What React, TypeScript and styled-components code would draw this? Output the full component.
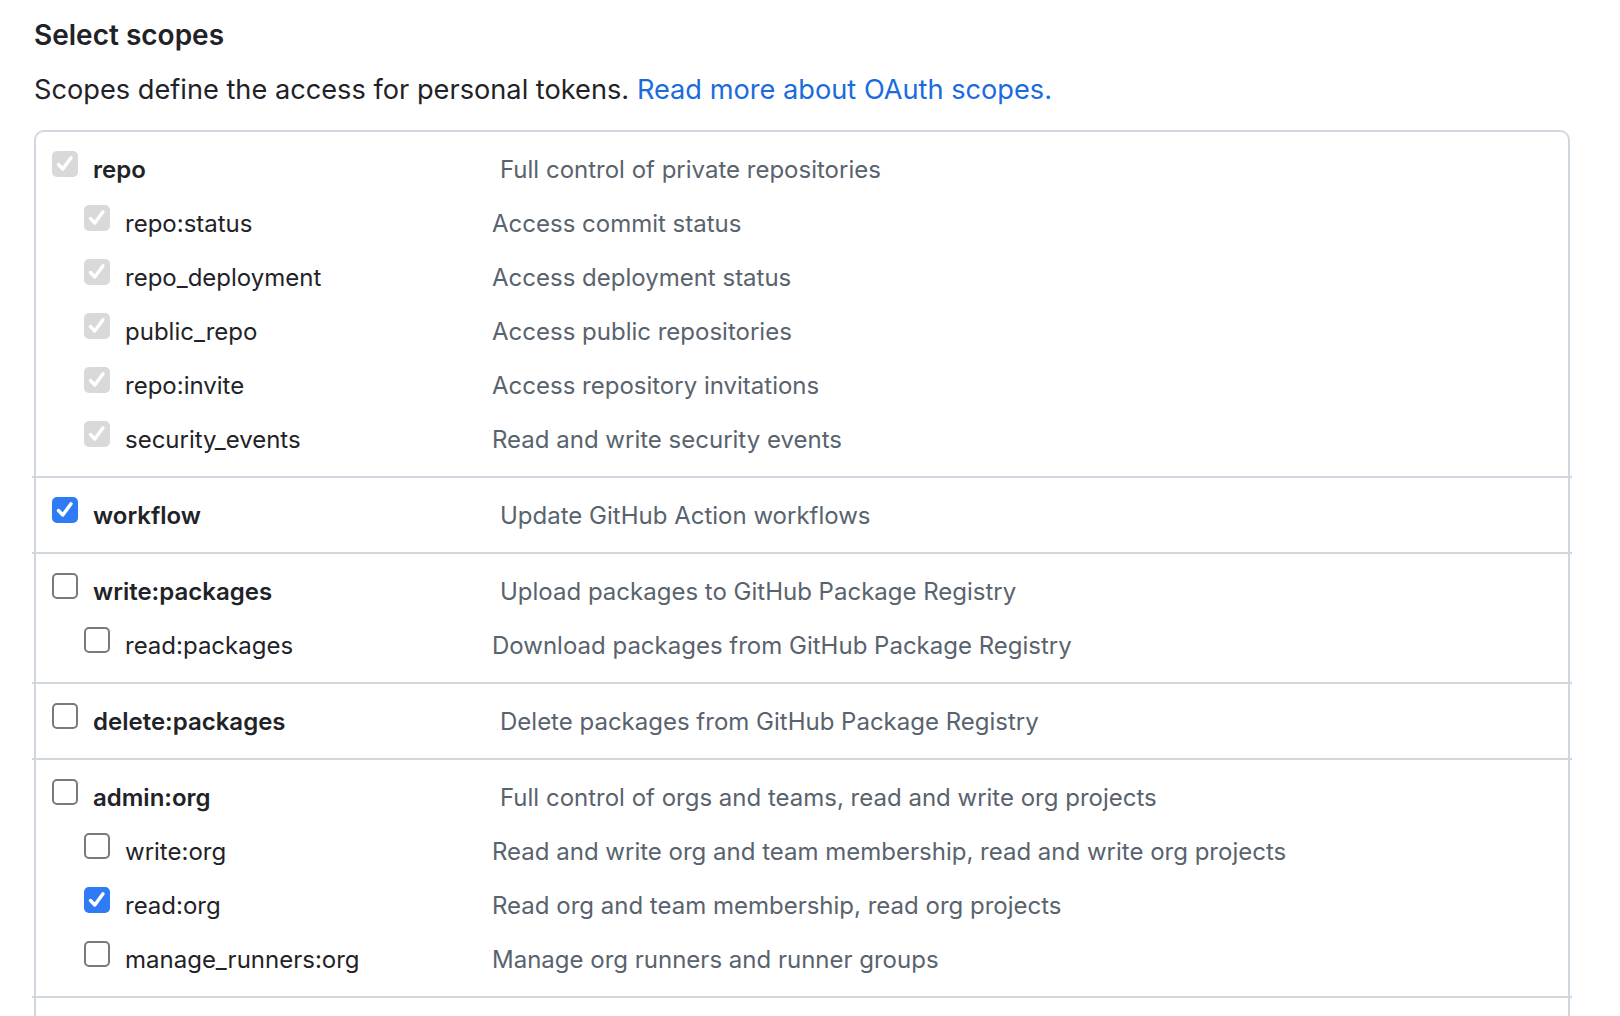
import React from "react";
import styled, { createGlobalStyle } from "styled-components";

const GlobalStyle = createGlobalStyle`
  html, body {
    margin: 0;
    padding: 0;
    background: #ffffff;
    overflow: hidden;
  }
  body {
    font-family: Inter, "Liberation Sans", Arial, sans-serif;
    color: #1f2328;
    -webkit-font-smoothing: antialiased;
  }
`;

const Page = styled.div`
  padding: 15px 50px 0 34px;
`;

const Heading = styled.h2`
  margin: 0;
  font-size: 28px;
  line-height: 40px;
  font-weight: 600;
  color: #1f2328;
`;

const Lead = styled.p`
  margin: 17px 0 22px;
  font-size: 27.2px;
  line-height: 36px;
  color: #1f2328;
`;

const Link = styled.a`
  color: #1b6bdc;
  text-decoration: none;
`;

const ScopeBox = styled.div`
  border: 2px solid #d0d7de;
  border-radius: 10px;
  background: #ffffff;
`;

const Divider = styled.div`
  height: 2px;
  margin: 0 -4px;
  background: #d0d7de;
`;

const Section = styled.div`
  display: flex;
  flex-direction: column;
  gap: 18px;
  padding: 19px 16px;
`;

const Row = styled.div<{ $sub?: boolean }>`
  display: grid;
  grid-template-columns: 26px ${(p) => (p.$sub ? "352px" : "392px")} 1fr;
  column-gap: 15px;
  padding-left: ${(p) => (p.$sub ? "32px" : "0")};
  font-size: 24px;
  line-height: 36px;
  align-items: start;
`;

const Label = styled.span<{ $sub?: boolean }>`
  margin: 1px 0 -1px;
  font-weight: ${(p) => (p.$sub ? 400 : 600)};
  color: #1f2328;
  white-space: nowrap;
`;

const Desc = styled.span`
  margin: 1px 0 -1px;
  color: #59636e;
  white-space: nowrap;
`;

type BoxState = "disabled" | "checked" | "unchecked";

const Check = styled.span<{ $state: BoxState }>`
  display: flex;
  align-items: center;
  justify-content: center;
  box-sizing: border-box;
  width: 26px;
  height: 26px;
  border-radius: 5px;
  background: ${(p) =>
    p.$state === "checked" ? "#2f7bf5" : p.$state === "disabled" ? "#d9d9d9" : "#ffffff"};
  border: ${(p) => (p.$state === "unchecked" ? "2px solid #7a7a7a" : "none")};
`;

const CheckBox = ({ state }: { state: BoxState }) => (
  <Check $state={state}>
    {state !== "unchecked" && (
      <svg width="26" height="26" viewBox="0 0 26 26">
        <path
          d="M6.5 13.5 L10.8 18 L19 6.8"
          fill="none"
          stroke="#ffffff"
          strokeWidth="3.4"
          strokeLinecap="round"
          strokeLinejoin="round"
        />
      </svg>
    )}
  </Check>
);

type Scope = { name: string; desc: string; state: BoxState };
type Group = { main: Scope; subs: Scope[] };

const groups: Group[] = [
  {
    main: { name: "repo", desc: "Full control of private repositories", state: "disabled" },
    subs: [
      { name: "repo:status", desc: "Access commit status", state: "disabled" },
      { name: "repo_deployment", desc: "Access deployment status", state: "disabled" },
      { name: "public_repo", desc: "Access public repositories", state: "disabled" },
      { name: "repo:invite", desc: "Access repository invitations", state: "disabled" },
      { name: "security_events", desc: "Read and write security events", state: "disabled" },
    ],
  },
  {
    main: { name: "workflow", desc: "Update GitHub Action workflows", state: "checked" },
    subs: [],
  },
  {
    main: { name: "write:packages", desc: "Upload packages to GitHub Package Registry", state: "unchecked" },
    subs: [
      { name: "read:packages", desc: "Download packages from GitHub Package Registry", state: "unchecked" },
    ],
  },
  {
    main: { name: "delete:packages", desc: "Delete packages from GitHub Package Registry", state: "unchecked" },
    subs: [],
  },
  {
    main: { name: "admin:org", desc: "Full control of orgs and teams, read and write org projects", state: "unchecked" },
    subs: [
      { name: "write:org", desc: "Read and write org and team membership, read and write org projects", state: "unchecked" },
      { name: "read:org", desc: "Read org and team membership, read org projects", state: "checked" },
      { name: "manage_runners:org", desc: "Manage org runners and runner groups", state: "unchecked" },
    ],
  },
  {
    main: { name: "admin:public_key", desc: "Full control of user public keys", state: "unchecked" },
    subs: [
      { name: "write:public_key", desc: "Write user public keys", state: "unchecked" },
      { name: "read:public_key", desc: "Read user public keys", state: "unchecked" },
    ],
  },
];

export default function App() {
  return (
    <>
      <GlobalStyle />
      <Page>
        <Heading>Select scopes</Heading>
        <Lead>
          Scopes define the access for personal tokens.{" "}
          <Link href="#">Read more about OAuth scopes.</Link>
        </Lead>
        <ScopeBox>
          {groups.map((g, i) => (
            <React.Fragment key={g.main.name}>
              {i > 0 && <Divider />}
              <Section>
                <Row>
                  <CheckBox state={g.main.state} />
                  <Label>{g.main.name}</Label>
                  <Desc>{g.main.desc}</Desc>
                </Row>
                {g.subs.map((s) => (
                  <Row $sub key={s.name}>
                    <CheckBox state={s.state} />
                    <Label $sub>{s.name}</Label>
                    <Desc>{s.desc}</Desc>
                  </Row>
                ))}
              </Section>
            </React.Fragment>
          ))}
        </ScopeBox>
      </Page>
    </>
  );
}
